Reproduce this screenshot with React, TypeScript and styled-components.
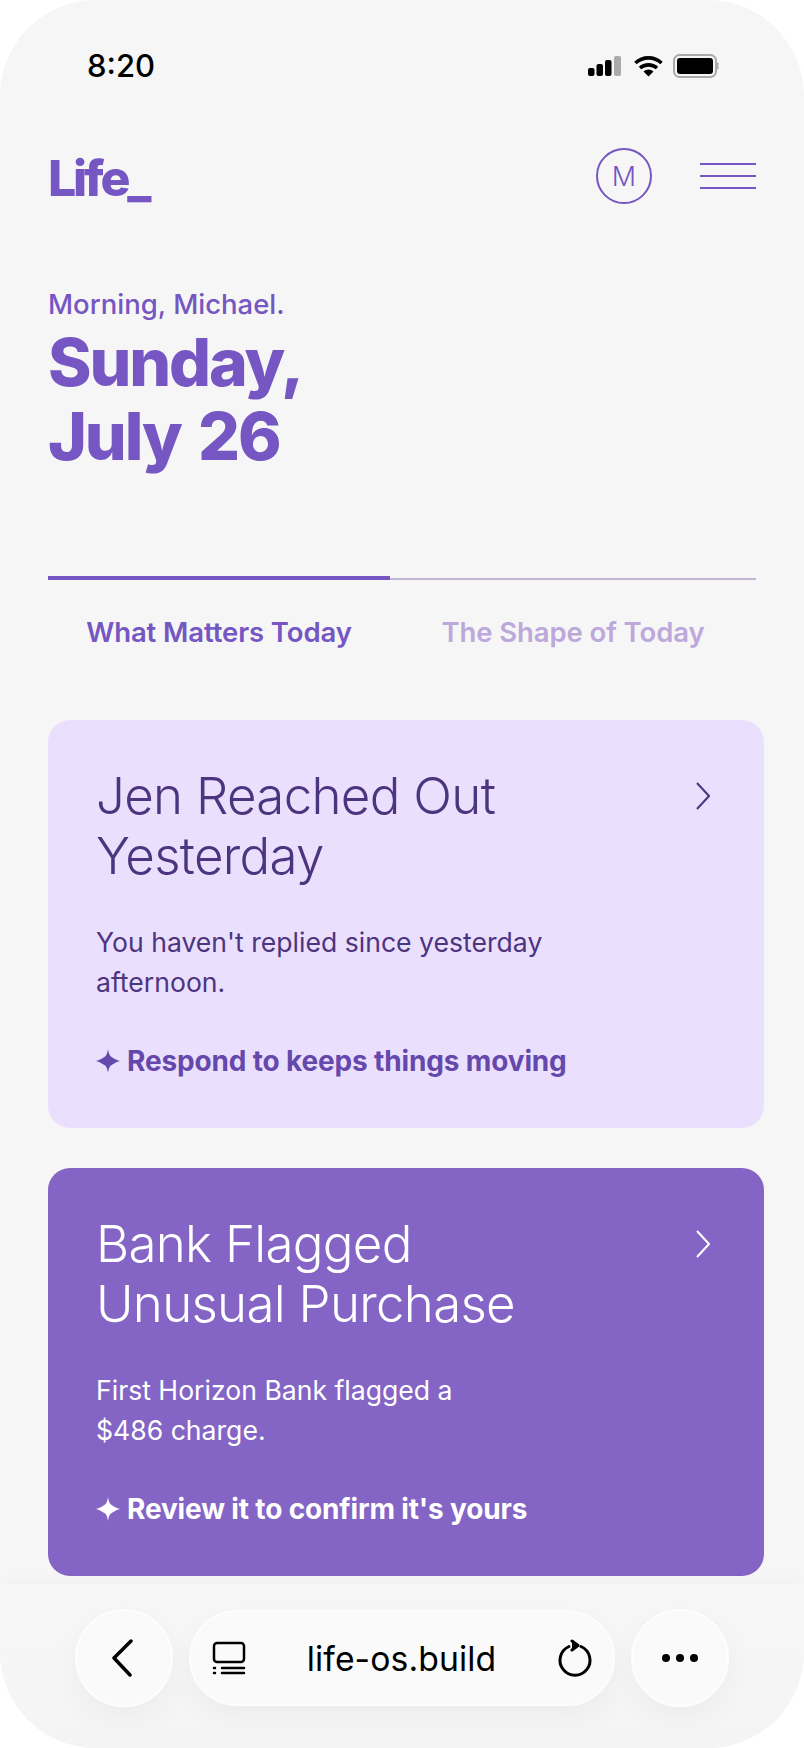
import styled, {createGlobalStyle} from "styled-components";

const GlobalStyle = createGlobalStyle`
  html, body {
    margin: 0;
    padding: 0;
    background: #ffffff;
  }
  * {
    box-sizing: border-box;
  }
`

const Screen = styled.div`
  width: 804px;
  height: 1748px;
  display: flex;
  flex-direction: column;
  overflow: hidden;
  background: #f6f6f6;
  border-radius: 96px;
  font-family: Inter, "Liberation Sans", sans-serif;
  color: #7556c2;
`

const StatusBar = styled.div`
  height: 130px;
  flex: none;
  display: flex;
  justify-content: space-between;
  align-items: flex-start;
  padding: 49px 84px 0 87px;
`

const Time = styled.div`
  font-size: 31px;
  line-height: 34px;
  font-weight: 500;
  color: #000;
`

const StatusIcons = styled.svg`
  width: 132px;
  height: 26px;
  margin-top: 5px;
`

const Content = styled.div`
  flex: 1;
  display: flex;
  flex-direction: column;
  padding: 0 40px 0 48px;
`

const Header = styled.header`
  display: flex;
  align-items: center;
  margin-right: 8px;
  height: 56px;
  margin-top: 18px;
`

const Logo = styled.div`
  flex: 1;
  padding-top: 3px;
  font-size: 50px;
  line-height: 56px;
  font-weight: 800;
  letter-spacing: -3.2px;
`

const Avatar = styled.div`
  width: 56px;
  height: 56px;
  border-radius: 50%;
  border: 2px solid #7556c2;
  display: flex;
  align-items: center;
  justify-content: center;
  font-size: 27px;
  font-weight: 300;
  margin-right: 48px;
`

const MenuButton = styled.div`
  width: 56px;
  display: flex;
  flex-direction: column;
  gap: 10px;
`

const MenuLine = styled.span`
  height: 2px;
  background: #7556c2;
`

const Greeting = styled.div`
  margin-top: 84px;
  font-size: 27.5px;
  line-height: 32px;
  font-weight: 500;
`

const DateTitle = styled.h1`
  margin: 5px 0 0;
  font-size: 66px;
  line-height: 74px;
  font-weight: 800;
  letter-spacing: -2.1px;
  word-spacing: 5px;
`

const Tabs = styled.nav`
  margin-top: 103px;
  margin-right: 8px;
  display: grid;
  grid-template-columns: 342px 366px;
`

const Tab = styled.div<{ $active?: boolean }>`
  height: 92px;
  padding-top: 28px;
  text-align: center;
  font-size: 27.5px;
  line-height: 48px;
  font-weight: 600;
  letter-spacing: -0.1px;
  color: ${(p) => (p.$active ? "#7556c2" : "#bda8dc")};
  border-top: ${(p) => (p.$active ? "4px solid #7556c2" : "2px solid #c3b5d8")};
  margin-top: ${(p) => (p.$active ? "0" : "2px")};
`

const Card = styled.article<{ $dark?: boolean }>`
  height: 408px;
  margin-top: ${(p) => (p.$dark ? "40px" : "50px")};
  padding: 46px 54px 0 48px;
  border-radius: 22px;
  background: ${(p) => (p.$dark ? "#8465c6" : "#ebdffe")};
  color: ${(p) => (p.$dark ? "#ffffff" : "#4c347f")};
`

const CardHead = styled.div`
  display: flex;
  justify-content: space-between;
  align-items: flex-start;
`

const CardTitle = styled.h2`
  margin: 0;
  font-size: 51px;
  line-height: 60px;
  font-weight: 300;
  letter-spacing: -0.7px;
`

const Chevron = styled.svg`
  width: 14px;
  height: 28px;
  margin-top: 16px;
  fill: none;
  stroke: currentColor;
  stroke-width: 2;
`

const CardText = styled.p`
  margin: 36px 0 0;
  font-size: 26.6px;
  line-height: 40px;
  font-weight: 400;
`

const CardHint = styled.div<{ $dark?: boolean }>`
  margin-top: 39px;
  display: flex;
  align-items: center;
  gap: 7px;
  font-size: 28px;
  line-height: 40px;
  font-weight: 700;
  letter-spacing: -0.15px;
  color: ${(p) => (p.$dark ? "#ffffff" : "#6548ac")};
`

const Spark = styled.svg`
  width: 24px;
  height: 24px;
  fill: currentColor;
`

const BottomBar = styled.div`
  flex: none;
  height: 164px;
  padding: 25px 75px 0;
  display: flex;
  justify-content: space-between;
  align-items: flex-start;
  color: #000;
  background: linear-gradient(#f7f7f7, #f4f4f4);
  box-shadow: 0 -6px 12px rgba(0, 0, 0, 0.015);
`

const RoundButton = styled.div`
  width: 98px;
  height: 98px;
  border-radius: 50%;
  display: flex;
  align-items: center;
  justify-content: center;
  background: #fafafa;
  border: 2px solid #fdfdfd;
  box-shadow: 0 10px 30px rgba(0, 0, 0, 0.04);
`

const AddressPill = styled.div`
  width: 426px;
  height: 96px;
  margin-top: 1px;
  padding: 0 20px 0 21px;
  border-radius: 48px;
  display: flex;
  align-items: center;
  justify-content: space-between;
  background: #fafafa;
  border: 2px solid #fdfdfd;
  box-shadow: 0 10px 30px rgba(0, 0, 0, 0.04);
`

const Url = styled.span`
  font-size: 33.7px;
  font-weight: 400;
  letter-spacing: 0.1px;
`

const Icon = styled.svg`
  fill: none;
  stroke: #000;
  stroke-width: 3;
  stroke-linecap: round;
  stroke-linejoin: round;
`

const cards = [
  {
    title: ["Jen Reached Out", "Yesterday"],
    text: ["You haven't replied since yesterday", "afternoon."],
    hint: "Respond to keeps things moving",
    dark: false,
  },
  {
    title: ["Bank Flagged", "Unusual Purchase"],
    text: ["First Horizon Bank flagged a", "$486 charge."],
    hint: "Review it to confirm it's yours",
    dark: true,
  },
]

const App = () => {
  return (
    <Screen>
      <GlobalStyle />
      <StatusBar>
        <Time>8:20</Time>
        <StatusIcons viewBox="0 0 132 26">
          <rect x="0" y="14" width="6.500" height="8" rx="2" fill="#000" />
          <rect x="8.500" y="10" width="6.500" height="12" rx="2" fill="#000" />
          <rect x="17" y="6" width="6.500" height="16" rx="2" fill="#000" />
          <rect x="26" y="2" width="7" height="20" rx="2" fill="#aaa" />
          <path d="M47.500 9a19 19 0 0 1 26 0M52 14a13 13 0 0 1 17 0" fill="none" stroke="#000" strokeWidth="3.600" />
          <path d="M55.500 17.500a7.500 7.500 0 0 1 10 0L60.500 22.500z" fill="#000" />
          <rect x="86" y="1" width="42" height="22" rx="5.500" fill="none" stroke="#aaa" strokeWidth="2" />
          <rect x="89" y="4" width="36" height="16" rx="3" fill="#000" />
          <rect x="129" y="8.500" width="1.500" height="7" rx="0.700" fill="#aaa" />
        </StatusIcons>
      </StatusBar>

      <Content>
        <Header>
          <Logo>Life_</Logo>
          <Avatar>M</Avatar>
          <MenuButton>
            <MenuLine />
            <MenuLine />
            <MenuLine />
          </MenuButton>
        </Header>

        <Greeting>Morning, Michael.</Greeting>
        <DateTitle>Sunday,<br />July 26</DateTitle>

        <Tabs>
          <Tab $active>What Matters Today</Tab>
          <Tab>The Shape of Today</Tab>
        </Tabs>

        {cards.map((c) => (
          <Card key={c.hint} $dark={c.dark}>
            <CardHead>
              <CardTitle>{c.title[0]}<br />{c.title[1]}</CardTitle>
              <Chevron viewBox="0 0 14 28"><path d="M1 1l12 13L1 27" /></Chevron>
            </CardHead>
            <CardText>{c.text[0]}<br />{c.text[1]}</CardText>
            <CardHint $dark={c.dark}>
              <Spark viewBox="0 0 24 24"><path d="M12 0c.9 5.500 1.900 7 4 8.200 1.800 1.100 4.500 2.800 8 3.800-3.500 1-6.200 2.700-8 3.800-2.100 1.200-3.100 2.700-4 8.200-.9-5.500-1.900-7-4-8.200C6.200 14.700 3.500 13 0 12c3.500-1 6.200-2.700 8-3.800 2.100-1.200 3.100-2.700 4-8.200z" /></Spark>
              {c.hint}
            </CardHint>
          </Card>
        ))}
      </Content>

      <BottomBar>
        <RoundButton>
          <Icon width="22" height="38" viewBox="0 0 22 38" style={{strokeWidth: 3.5, marginRight: 5}}><path d="M20 2L3 19l16 17" /></Icon>
        </RoundButton>
        <AddressPill>
          <Icon width="34" height="34" viewBox="0 0 34 34" style={{strokeWidth: 2.5}}>
            <rect x="2" y="2" width="30" height="19" rx="3" />
            <path d="M10 27h22M10 32h22M2 27h1M2 32h1" />
          </Icon>
          <Url>life-os.build</Url>
          <Icon width="36" height="38" viewBox="0 0 36 38">
            <path d="M12 7.500a15 15 0 1 0 12 0" />
            <path d="M15 2l6 4.500-6 4.500" fill="#000" />
          </Icon>
        </AddressPill>
        <RoundButton>
          <Icon width="38" height="10" viewBox="0 0 38 10" style={{fill: "#000", stroke: "none"}}>
            <circle cx="5" cy="5" r="4" />
            <circle cx="19" cy="5" r="4" />
            <circle cx="33" cy="5" r="4" />
          </Icon>
        </RoundButton>
      </BottomBar>
    </Screen>
  )
}

export default App
